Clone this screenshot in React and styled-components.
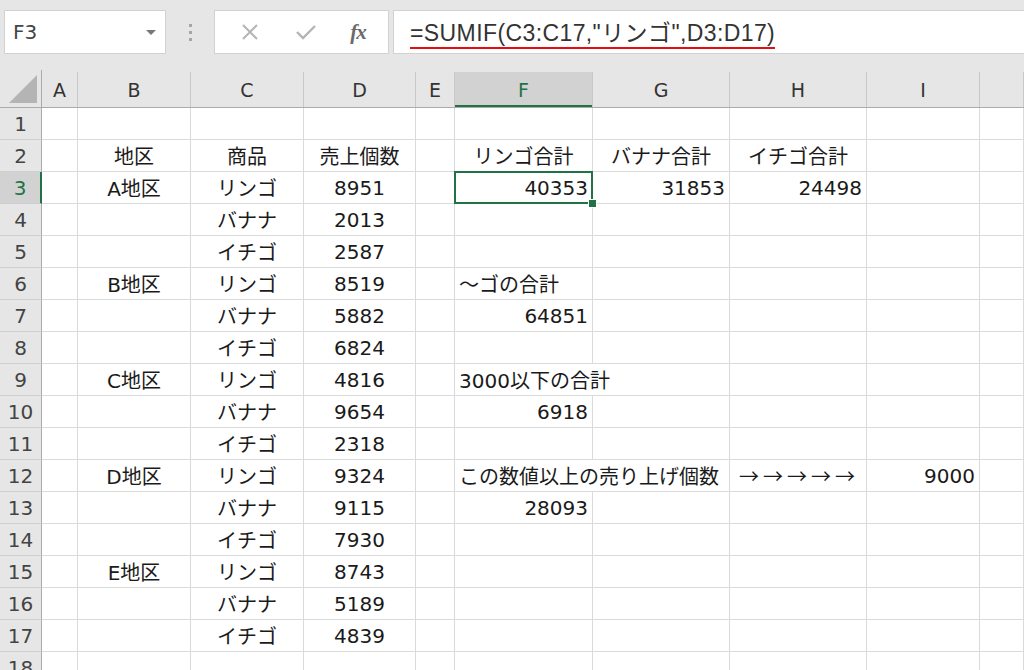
import React from "react";
import styled, { createGlobalStyle } from "styled-components";

const GlobalStyle = createGlobalStyle`
  html, body {
    margin: 0;
    padding: 0;
    background: #ffffff;
  }
  body {
    font-family: "DejaVu Sans", "Noto Sans CJK JP", sans-serif;
  }
  * {
    box-sizing: border-box;
  }
`;

const GREEN = "#217346";
const COL_TEMPLATE =
  "42px 36px 113px 113px 112px 39px 138px 137px 137px 113px 1fr";
const COLUMNS = ["A", "B", "C", "D", "E", "F", "G", "H", "I", ""];

// cells keyed by row then column; a = align, s = span
const DATA = {
  2: {
    B: { t: "地区", a: "center" },
    C: { t: "商品", a: "center" },
    D: { t: "売上個数", a: "center" },
    F: { t: "リンゴ合計", a: "center" },
    G: { t: "バナナ合計", a: "center" },
    H: { t: "イチゴ合計", a: "center" },
  },
  3: {
    B: { t: "A地区", a: "center" },
    C: { t: "リンゴ", a: "center" },
    D: { t: "8951", a: "center" },
    F: { t: "40353", a: "right", sel: true },
    G: { t: "31853", a: "right" },
    H: { t: "24498", a: "right" },
  },
  4: { C: { t: "バナナ", a: "center" }, D: { t: "2013", a: "center" } },
  5: { C: { t: "イチゴ", a: "center" }, D: { t: "2587", a: "center" } },
  6: {
    B: { t: "B地区", a: "center" },
    C: { t: "リンゴ", a: "center" },
    D: { t: "8519", a: "center" },
    F: { t: "～ゴの合計", a: "left" },
  },
  7: {
    C: { t: "バナナ", a: "center" },
    D: { t: "5882", a: "center" },
    F: { t: "64851", a: "right" },
  },
  8: { C: { t: "イチゴ", a: "center" }, D: { t: "6824", a: "center" } },
  9: {
    B: { t: "C地区", a: "center" },
    C: { t: "リンゴ", a: "center" },
    D: { t: "4816", a: "center" },
    F: { t: "3000以下の合計", a: "left", s: 2 },
  },
  10: {
    C: { t: "バナナ", a: "center" },
    D: { t: "9654", a: "center" },
    F: { t: "6918", a: "right" },
  },
  11: { C: { t: "イチゴ", a: "center" }, D: { t: "2318", a: "center" } },
  12: {
    B: { t: "D地区", a: "center" },
    C: { t: "リンゴ", a: "center" },
    D: { t: "9324", a: "center" },
    F: { t: "この数値以上の売り上げ個数", a: "left", s: 2 },
    H: { t: "→→→→→", a: "left", wide: true },
    I: { t: "9000", a: "right" },
  },
  13: {
    C: { t: "バナナ", a: "center" },
    D: { t: "9115", a: "center" },
    F: { t: "28093", a: "right" },
  },
  14: { C: { t: "イチゴ", a: "center" }, D: { t: "7930", a: "center" } },
  15: {
    B: { t: "E地区", a: "center" },
    C: { t: "リンゴ", a: "center" },
    D: { t: "8743", a: "center" },
  },
  16: { C: { t: "バナナ", a: "center" }, D: { t: "5189", a: "center" } },
  17: { C: { t: "イチゴ", a: "center" }, D: { t: "4839", a: "center" } },
};

const Page = styled.div`
  width: 100%;
  height: 670px;
  overflow: hidden;
  display: flex;
  flex-direction: column;
  background: #ffffff;
`;

const Toolbar = styled.div`
  height: 70px;
  flex: none;
  background: #e6e6e6;
  display: flex;
  align-items: flex-start;
  padding: 10px 0 0 4px;
`;

const NameBox = styled.div`
  width: 162px;
  height: 44px;
  background: #fff;
  border: 1px solid #d2d2d2;
  display: flex;
  align-items: center;
  justify-content: space-between;
  padding: 0 9px 0 8px;
  font-family: "DejaVu Sans", sans-serif;
  font-size: 20px;
  color: #444;
`;

const DropArrow = styled.span`
  width: 0;
  height: 0;
  border-left: 5px solid transparent;
  border-right: 5px solid transparent;
  border-top: 5px solid #777;
`;

const Grip = styled.div`
  width: 48px;
  height: 44px;
  display: flex;
  flex-direction: column;
  align-items: center;
  justify-content: center;
  gap: 4px;

  span {
    width: 3px;
    height: 3px;
    background: #a6a6a6;
  }
`;

const ButtonsBox = styled.div`
  width: 175px;
  height: 44px;
  background: #fff;
  border: 1px solid #d2d2d2;
  display: flex;
  align-items: center;
  justify-content: space-around;
  padding: 0 6px 0 8px;
`;

const FxLabel = styled.span`
  font-family: "Liberation Serif", serif;
  font-style: italic;
  font-weight: bold;
  font-size: 21px;
  color: #6a6a6a;
  letter-spacing: -1px;
`;

const FormulaBox = styled.div`
  flex: 1;
  height: 44px;
  margin-left: 4px;
  margin-right: -2px;
  background: #fff;
  border: 1px solid #d2d2d2;
  display: flex;
  align-items: center;
  padding-left: 16px;
`;

const FormulaText = styled.span`
  font-family: "Liberation Sans", "Noto Sans CJK JP", sans-serif;
  font-size: 23px;
  color: #333;
  line-height: 26px;
  border-bottom: 2px solid #e01010;
  padding-bottom: 1px;
  margin-top: 4px;
  letter-spacing: 0.4px;
`;

const Sheet = styled.div`
  flex: 1;
  display: flex;
  flex-direction: column;
`;

const HeaderRow = styled.div`
  display: grid;
  grid-template-columns: ${COL_TEMPLATE};
  height: 38px;
  flex: none;
  background: #e6e6e6;
  border-bottom: 1px solid #ababab;
`;

const Corner = styled.div`
  border-right: 1px solid #ababab;
  display: flex;
  align-items: flex-end;
  justify-content: flex-end;
  padding: 0 4px 4px 0;
`;

const ColHead = styled.div`
  display: flex;
  align-items: center;
  justify-content: center;
  border-right: 1px solid #c9c9c9;
  margin-top: 2px;
  font-size: 19px;
  color: ${(p) => (p.$active ? GREEN : "#333")};
  background: ${(p) => (p.$active ? "#d2d2d2" : "transparent")};
  box-shadow: ${(p) => (p.$active ? `inset 0 -2px 0 ${GREEN}` : "none")};
`;

const Row = styled.div`
  display: grid;
  grid-template-columns: ${COL_TEMPLATE};
  height: 32px;
  flex: none;
`;

const RowHead = styled.div`
  display: flex;
  align-items: center;
  justify-content: center;
  background: ${(p) => (p.$active ? "#d2d2d2" : "#e6e6e6")};
  color: ${(p) => (p.$active ? GREEN : "#444")};
  border-bottom: 1px solid #cfcfcf;
  border-right: ${(p) => (p.$active ? `2px solid ${GREEN}` : "1px solid #ababab")};
  font-size: 20px;
`;

const Cell = styled.div`
  position: relative;
  grid-column: span ${(p) => p.$span || 1};
  border-right: 1px solid #dadada;
  border-bottom: 1px solid #dadada;
  display: flex;
  align-items: center;
  justify-content: ${(p) =>
    p.$align === "right" ? "flex-end" : p.$align === "center" ? "center" : "flex-start"};
  padding: 0 4px 0 4px;
  white-space: nowrap;
  font-size: 20px;
  color: #1a1a1a;
  ${(p) =>
    p.$wide &&
    `
    font-family: "Noto Sans CJK JP", sans-serif;
    letter-spacing: 4px;
    padding-left: 9px;
  `}

  ${(p) =>
    p.$selected &&
    `
    &::after {
      content: "";
      position: absolute;
      top: -1px;
      left: -1px;
      right: -1px;
      bottom: -1px;
      border: 2px solid ${GREEN};
      z-index: 2;
    }
    &::before {
      content: "";
      position: absolute;
      right: -5px;
      bottom: -5px;
      width: 7px;
      height: 7px;
      background: ${GREEN};
      border: 1px solid #fff;
      z-index: 3;
    }
  `}
`;

const CrossIcon = () => (
  <svg width="22" height="22" viewBox="0 0 22 22">
    <path d="M4 4 L18 18 M18 4 L4 18" stroke="#b5b5b5" strokeWidth="2" fill="none" />
  </svg>
);

const CheckIcon = () => (
  <svg width="24" height="22" viewBox="0 0 24 22">
    <path d="M3 11 L9 17 L21 5" stroke="#b5b5b5" strokeWidth="2.4" fill="none" />
  </svg>
);

const CornerTriangle = () => (
  <svg width="28" height="28" viewBox="0 0 28 28">
    <polygon points="0,28 28,28 28,0" fill="#b4b4b4" />
  </svg>
);

const renderRow = (r) => {
  const cells = DATA[r] || {};
  const out = [];
  let skip = 0;
  COLUMNS.forEach((c, i) => {
    if (skip > 0) {
      skip -= 1;
      return;
    }
    const cell = c ? cells[c] : null;
    const span = cell && cell.s ? cell.s : 1;
    skip = span - 1;
    out.push(
      <Cell
        key={i}
        $span={span}
        $align={cell ? cell.a : "left"}
        $selected={cell && cell.sel}
        $wide={cell && cell.wide}
      >
        {cell ? cell.t : ""}
      </Cell>
    );
  });
  return out;
};

const App = () => {
  const rows = Array.from({ length: 18 }, (_, i) => i + 1);

  return (
    <Page>
      <GlobalStyle />
      <Toolbar>
        <NameBox>
          F3
          <DropArrow />
        </NameBox>
        <Grip>
          <span />
          <span />
          <span />
        </Grip>
        <ButtonsBox>
          <CrossIcon />
          <CheckIcon />
          <FxLabel>fx</FxLabel>
        </ButtonsBox>
        <FormulaBox>
          <FormulaText>=SUMIF(C3:C17,"リンゴ",D3:D17)</FormulaText>
        </FormulaBox>
      </Toolbar>
      <Sheet>
        <HeaderRow>
          <Corner>
            <CornerTriangle />
          </Corner>
          {COLUMNS.map((c, i) => (
            <ColHead key={i} $active={c === "F"}>
              {c}
            </ColHead>
          ))}
        </HeaderRow>
        {rows.map((r) => (
          <Row key={r}>
            <RowHead $active={r === 3}>{r}</RowHead>
            {renderRow(r)}
          </Row>
        ))}
      </Sheet>
    </Page>
  );
};

export default App;
